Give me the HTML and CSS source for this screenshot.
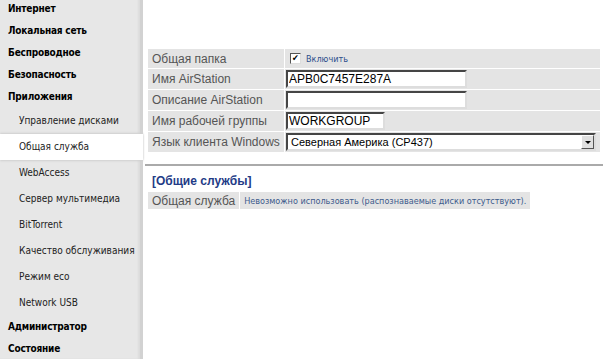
FILE: index.html
```html
<!DOCTYPE html>
<html lang="ru">
<head>
    <meta charset="UTF-8">
    <title>AirStation - Общая служба</title>
    <link rel="stylesheet" href="styles.css">
</head>
<body>
    <div class="page">
        <div class="menu">
            <a class="top">Интернет</a>
            <a class="top">Локальная сеть</a>
            <a class="top">Беспроводное</a>
            <a class="top">Безопасность</a>
            <a class="top">Приложения</a>
            <a class="sub">Управление дисками</a>
            <a class="sub active">Общая служба</a>
            <a class="sub">WebAccess</a>
            <a class="sub">Сервер мультимедиа</a>
            <a class="sub">BitTorrent</a>
            <a class="sub">Качество обслуживания</a>
            <a class="sub">Режим eco</a>
            <a class="sub">Network USB</a>
            <a class="top">Администратор</a>
            <a class="top">Состояние</a>
        </div>
        <div class="content">
            <table class="form">
                <tr>
                    <th>Общая папка</th>
                    <td><label class="check"><span class="box"></span>Включить</label></td>
                </tr>
                <tr>
                    <th>Имя AirStation</th>
                    <td><input type="text" class="w-long" value="APB0C7457E287A"></td>
                </tr>
                <tr>
                    <th>Описание AirStation</th>
                    <td><input type="text" class="w-long" value=""></td>
                </tr>
                <tr>
                    <th>Имя рабочей группы</th>
                    <td><input type="text" class="w-short" value="WORKGROUP"></td>
                </tr>
                <tr>
                    <th>Язык клиента Windows</th>
                    <td>
                        <div class="select">
                            <span>Северная Америка (CP437)</span>
                            <b class="arrow"></b>
                        </div>
                    </td>
                </tr>
            </table>
            <hr class="sep">
            <div class="section-title">[Общие службы]</div>
            <table class="form status">
                <tr>
                    <th>Общая служба</th>
                    <td class="note">Невозможно использовать (распознаваемые диски отсутствуют).</td>
                </tr>
            </table>
        </div>
    </div>
</body>
</html>
```

FILE: styles.css
```css
html, body {
    margin: 0;
    padding: 0;
    background: #ffffff;
}
.page {
    display: flex;
    width: 605px;
    height: 359px;
    overflow: hidden;
}
.menu {
    width: 140px;
    flex: none;
    margin-top: -2px;
    background: #e7e7e7;
    border-right: 3px solid #d2d2d2;
    box-shadow: inset -2px 0 2px #dcdcdc;
    font-family: "DejaVu Sans Condensed", "DejaVu Sans", sans-serif;
    font-size: 10px;
    color: #000;
    white-space: nowrap;
}
.menu a {
    display: block;
}
.menu .top {
    font-weight: bold;
    height: 22px;
    line-height: 22px;
    padding-left: 8px;
    letter-spacing: -0.2px;
}
.menu .sub {
    height: 26px;
    line-height: 26px;
    padding-left: 19px;
    color: #222;
}
.menu .active {
    background: #ffffff;
    margin-right: -3px;
    box-shadow: 0 1px 2px #cfcfcf, 0 -1px 2px #cfcfcf;
}
.content {
    flex: 1;
    padding: 48px 0 0 5px;
    font-family: Arial, "Liberation Sans", sans-serif;
}
table.form {
    border-collapse: separate;
    border-spacing: 0 1px;
    width: 452px;
}
.form th {
    background: #e4e4e4;
    color: #555;
    font-size: 12px;
    font-weight: normal;
    text-align: left;
    padding: 0 2px 0 4px;
    border-right: 1px solid #fff;
    white-space: nowrap;
    width: 130px;
}
.form td {
    background: #e4e4e4;
    padding: 1px 1px;
    height: 17px;
}
.form input[type="text"] {
    font-family: Arial, "Liberation Sans", sans-serif;
    font-size: 12px;
    height: 18px;
    box-sizing: border-box;
    padding: 0 1px;
    margin: 0;
    border: 2px inset #999;
    border-right-color: #ddd;
    border-bottom-color: #ddd;
    background: #fff;
    color: #000;
    display: block;
}
.w-long { width: 181px; }
.w-short { width: 99px; }
.check {
    display: flex;
    align-items: center;
    color: #2c4f8c;
    font-family: "DejaVu Sans Condensed", "DejaVu Sans", sans-serif;
    font-size: 9px;
    padding-left: 4px;
}
.box {
    width: 9px;
    height: 9px;
    margin-right: 5px;
    background: #fff;
    border-top: 1px solid #555;
    border-left: 1px solid #555;
    border-right: 1px solid #ddd;
    border-bottom: 1px solid #ddd;
    display: flex;
    align-items: center;
    justify-content: center;
    font-size: 9px;
    line-height: 9px;
    color: #000;
}
.box::after {
    content: "✔";
    font-weight: bold;
}
.select {
    display: flex;
    align-items: center;
    width: 310px;
    height: 18px;
    box-sizing: border-box;
    border: 2px inset #999;
    border-right-color: #ddd;
    border-bottom-color: #ddd;
    background: #fff;
    font-size: 11px;
    padding-left: 3px;
}
.select span {
    flex: 1;
}
.arrow {
    width: 13px;
    height: 14px;
    background: #e0e0e0;
    border-left: 1px solid #fff;
    border-top: 1px solid #fff;
    border-right: 1px solid #555;
    border-bottom: 1px solid #555;
    box-sizing: border-box;
    display: flex;
    align-items: center;
    justify-content: center;
}
.arrow::after {
    content: "";
    border-left: 3px solid transparent;
    border-right: 3px solid transparent;
    border-top: 3px solid #000;
}
.sep {
    border: none;
    border-top: 2px solid #aaa;
    margin: 11px 0 0 -3px;
    width: 458px;
}
.section-title {
    color: #233b86;
    font-weight: bold;
    font-size: 12px;
    margin: 8px 0 3px 4px;
}
table.status {
    width: auto;
}
.status th {
    width: auto;
    padding: 0 4px;
}
.status td.note {
    color: #3d5b8c;
    font-family: "DejaVu Sans Condensed", "DejaVu Sans", sans-serif;
    font-size: 9px;
    padding: 0 4px;
}
```
